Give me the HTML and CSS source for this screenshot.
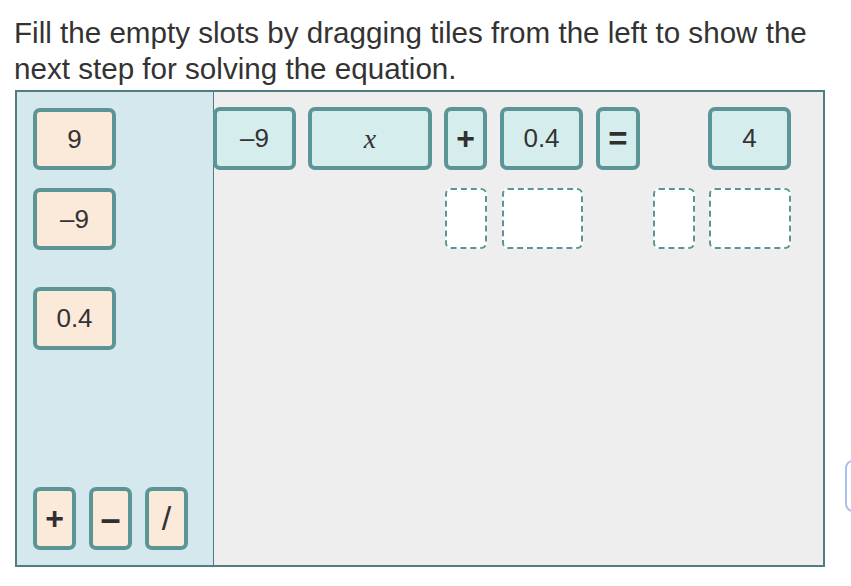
FILE: index.html
```html
<!DOCTYPE html>
<html>
<head>
<meta charset="utf-8">
<link rel="stylesheet" href="styles.css">
</head>
<body>
<p class="prompt">Fill the empty slots by dragging tiles from the left to show the next step for solving the equation.</p>
<div class="board">
  <div class="bank">
    <div class="tile src w83 n1">9</div>
    <div class="tile src w83 n2">–9</div>
    <div class="tile src w83 n3">0.4</div>
    <div class="ops">
      <div class="tile src w43 op">+</div>
      <div class="tile src w43 dash">–</div>
      <div class="tile src w43 slash">/</div>
    </div>
  </div>
  <div class="work">
    <div class="row eq">
      <div class="tile eqt w83 m-a">–9</div>
      <div class="tile eqt w124 m-b var">x</div>
      <div class="tile eqt w43 m-b op">+</div>
      <div class="tile eqt w83 m-c">0.4</div>
      <div class="tile eqt w44 m-c eqs">=</div>
      <div class="tile eqt w83 m-d">4</div>
    </div>
    <div class="row slots">
      <div class="slot w42 s-a"></div>
      <div class="slot w81 s-b"></div>
      <div class="slot w42 s-c"></div>
      <div class="slot w82 s-d"></div>
    </div>
  </div>
</div>
<div class="edge-btn"></div>
</body>
</html>
```

FILE: styles.css
```css
html, body {
  margin: 0;
  padding: 0;
  background: #ffffff;
  overflow: hidden;
}
body {
  width: 851px;
  height: 586px;
  position: relative;
  font-family: "Liberation Sans", Arial, sans-serif;
  color: #333333;
}
.prompt {
  margin: 0;
  padding: 15px 20px 0 14px;
  font-size: 29.6px;
  line-height: 36px;
  height: 75px;
  color: #333333;
}
.board {
  margin-left: 15px;
  width: 810px;
  height: 477px;
  box-sizing: border-box;
  border: 2px solid #4f7d82;
  display: flex;
  background: #eeeeee;
}
.bank {
  width: 197px;
  flex: none;
  box-sizing: border-box;
  background: #d4e8ed;
  border-right: 1px solid #4f7d82;
  display: flex;
  flex-direction: column;
  align-items: flex-start;
  padding: 16px 0 15px 16px;
}
.tile {
  box-sizing: border-box;
  height: 62px;
  border: 4px solid #5b9596;
  border-radius: 7px;
  display: flex;
  align-items: center;
  justify-content: center;
  font-size: 26px;
  color: #333333;
  flex: none;
}
.src { background: #fbe9da; }
.eqt { background: #d6eded; }
.n2 { margin-top: 18px; }
.n3 { margin-top: 37px; height: 63px; }
.ops {
  margin-top: auto;
  display: flex;
  gap: 13px;
}
.ops .tile { height: 63px; }
.op { font-weight: bold; font-size: 32px; color: #2f2f2f; }
.eqs { font-weight: bold; font-size: 33px; color: #2f2f2f; }
.dash { font-weight: bold; font-size: 36px; color: #2f2f2f; }
.slash { font-size: 34px; }
.var {
  font-family: "Liberation Serif", "Times New Roman", serif;
  font-style: italic;
  font-size: 28px;
}
.w42 { width: 42px; }
.w43 { width: 43px; }
.w44 { width: 44px; }
.w81 { width: 81px; }
.w82 { width: 82px; }
.w83 { width: 83px; }
.w124 { width: 124px; }
.work {
  flex: 1;
  padding-top: 15px;
}
.row { display: flex; }
.eq .tile { height: 63px; }
.m-a { margin-left: -1px; }
.m-b { margin-left: 12px; }
.m-c { margin-left: 13px; }
.m-d { margin-left: 68px; }
.slots { margin-top: 18px; }
.slot {
  box-sizing: border-box;
  height: 61px;
  border: 2px dashed #5b9596;
  border-radius: 6px;
  background: #ffffff;
}
.s-a { margin-left: 231px; }
.s-b { margin-left: 15px; }
.s-c { margin-left: 70px; }
.s-d { margin-left: 14px; }
.edge-btn {
  position: absolute;
  left: 845px;
  top: 460px;
  width: 30px;
  height: 52px;
  box-sizing: border-box;
  border: 2px solid #a9c1ea;
  border-radius: 8px;
}
```
